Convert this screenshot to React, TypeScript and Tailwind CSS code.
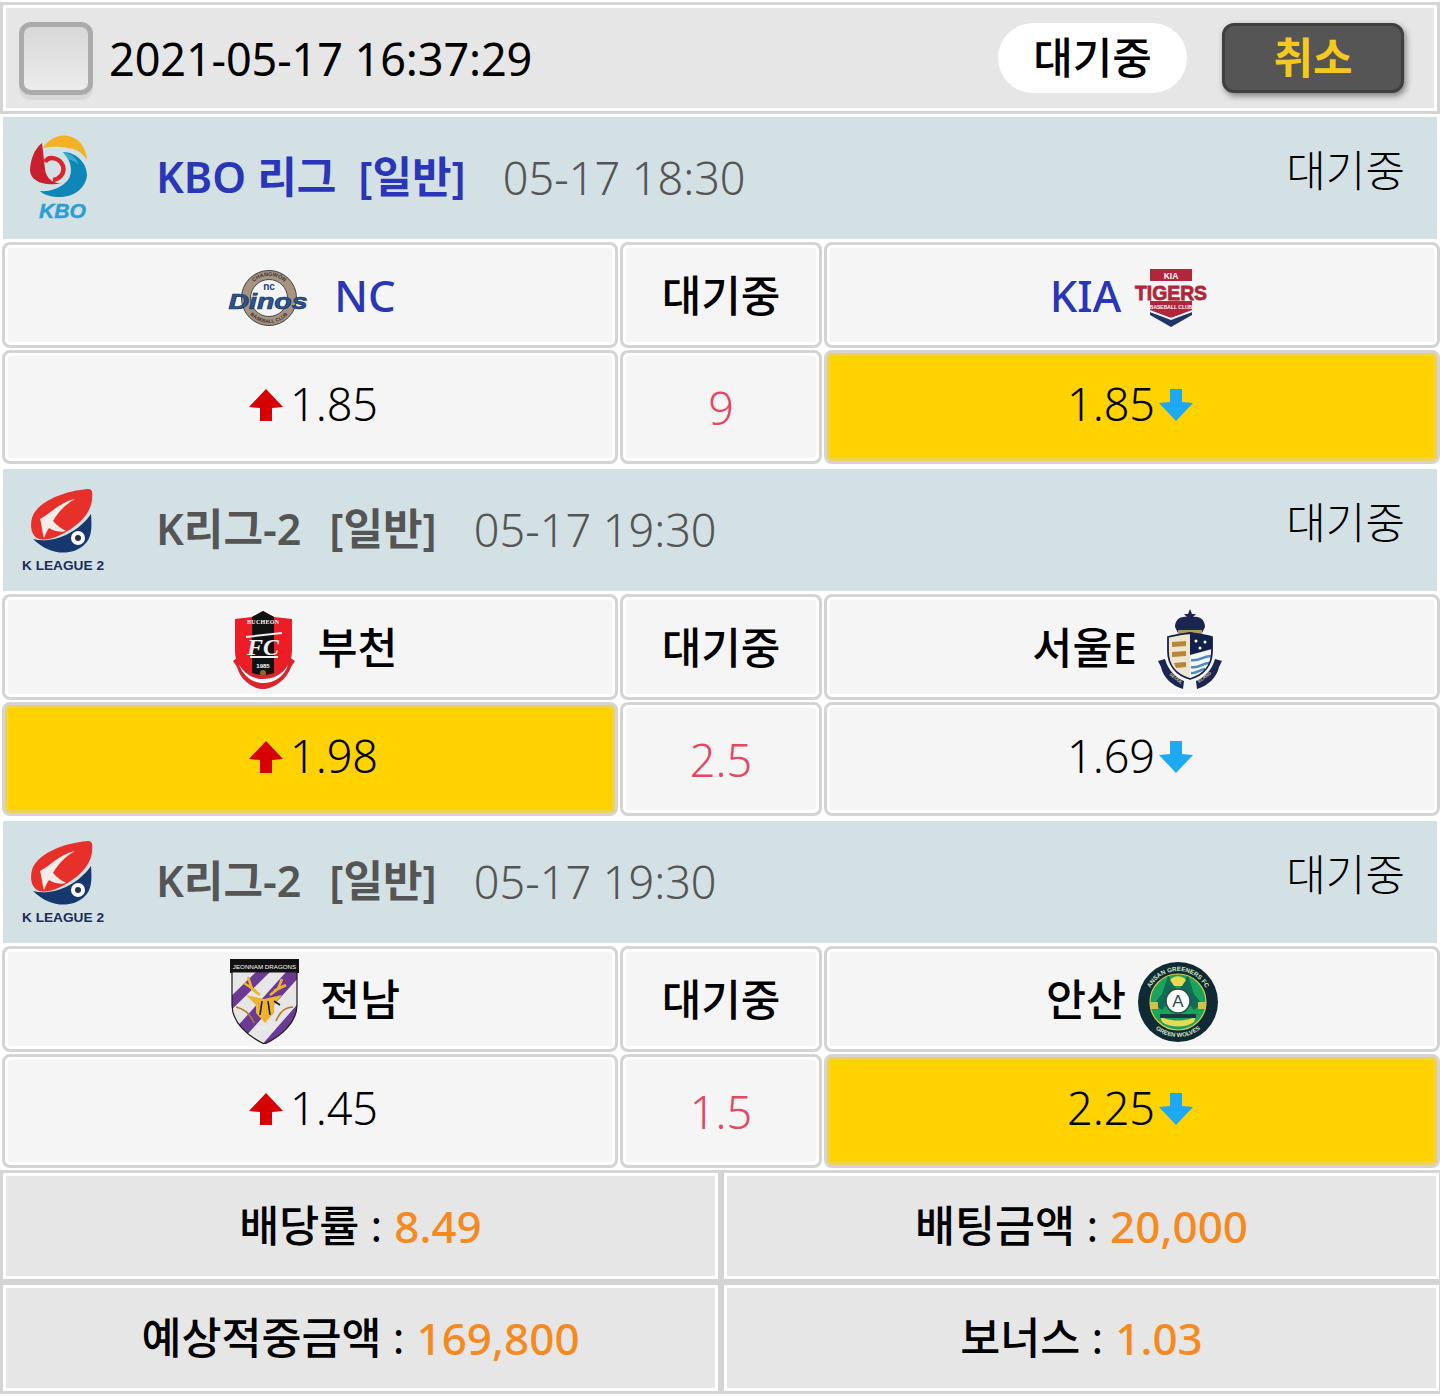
import React from 'react';

const cellClasses = "h-full rounded-lg border-[3px] border-[#d4d4d4] flex items-center justify-center";
const plainCell = "bg-[#f5f5f5] shadow-[inset_0_0_0_3px_#ffffff]";
const pickedCell = "bg-[#ffd200] shadow-[inset_0_0_0_3px_#eed251]";

const UpArrow = () => (
  <svg width="34" height="32" viewBox="0 0 34 32" className="shrink-0 mb-[4px]">
    <path d="M17 0 L34 18 L23 19 L23 32 L11 32 L11 19 L0 18 Z" fill="#d60000" />
  </svg>
);

const DownArrow = () => (
  <svg width="34" height="32" viewBox="0 0 34 32" className="shrink-0 mb-[4px]">
    <path d="M17 32 L34 14 L23 13 L23 0 L11 0 L11 13 L0 14 Z" fill="#1ea9f4" />
  </svg>
);

const KboLogo = () => (
  <svg width="57" height="87" viewBox="0 0 57 87" className="shrink-0">
    <path d="M13 13 C18 4 30 -1 38 1 C49 3 56 12 57 25 C52 17 45 13 37 13 C30 11 20 12 13 13 Z" fill="#f4b223" />
    <path d="M33 17 C46 17 57 28 57 40 C56 53 44 62 30 62 C22 62 14 60 10 56 C22 57 32 52 38 45 C43 38 42 26 33 17 Z" fill="#0f86b8" />
    <path d="M33 17 C40 18 47 23 49 30 C45 26 41 25 38 24 Z" fill="#39a9cf" />
    <path d="M12 8 C4 14 0 26 0 36 C1 46 14 52 32 48 C24 49 16 44 15 34 C14 26 13 16 12 8 Z" fill="#c8202f" />
    <path d="M15 27 C19 20 30 23 33 31 C35 38 30 44 23 45" fill="none" stroke="#d8262f" strokeWidth="4.5" />
    <text x="32.5" y="83" textAnchor="middle" fontFamily="'Liberation Sans', sans-serif" fontSize="20" fontWeight="700" fontStyle="italic" fill="#2b9fd5" stroke="#2b9fd5" strokeWidth="0.4" textLength="47" lengthAdjust="spacingAndGlyphs">KBO</text>
  </svg>
);

const KLeagueLogo = () => (
  <svg width="84" height="85" viewBox="0 0 84 85" className="shrink-0">
    <path d="M69 26 C70 40 70 50 62 57 C50 68 28 68 11 51 C30 56 55 46 69 26 Z" fill="#17386f" />
    <path d="M10 30 C14 15 40 3 66 1 C70 1 71 4 70 10 C70 24 58 36 44 44 C34 50 22 54 15 50 C9 46 8 38 10 30 Z" fill="#e8302a" />
    <path d="M18 31 C28 26 38 14 53 11 C42 17 35 26 31 33 C35 38 42 42 44 43 C37 45 30 42 27 40 C24 44 23 48 22 50 C20 44 20 38 18 31 Z" fill="#f7ece8" />
    <circle cx="56" cy="50" r="7" fill="#ffffff" />
    <circle cx="56" cy="50" r="3" fill="#27324f" />
    <text x="0" y="82" fontFamily="'Liberation Sans', sans-serif" fontSize="13.2" fontWeight="700" fill="#1b2c55" textLength="82" lengthAdjust="spacingAndGlyphs">K LEAGUE 2</text>
  </svg>
);

const DinosLogo = () => (
  <svg width="82" height="56" viewBox="0 0 82 56" className="shrink-0 mt-[5px]">
    <circle cx="42" cy="28" r="27.5" fill="#a8937e" stroke="#3e3f46" strokeWidth="1" />
    <circle cx="42" cy="28" r="18.5" fill="#f4f4f6" stroke="#4a4a50" strokeWidth="1" />
    <path id="dinosTop" d="M20 28 A22 22 0 0 1 64 28" fill="none" />
    <path id="dinosBottom" d="M17 28 A25 25 0 0 0 67 28" fill="none" />
    <text fontFamily="'Liberation Sans', sans-serif" fontSize="5.5" fontWeight="700" fill="#33343a">
      <textPath href="#dinosTop" startOffset="50%" textAnchor="middle">CHANGWON</textPath>
    </text>
    <text fontFamily="'Liberation Sans', sans-serif" fontSize="5" fontWeight="700" fill="#33343a">
      <textPath href="#dinosBottom" startOffset="50%" textAnchor="middle">BASEBALL CLUB</textPath>
    </text>
    <text x="42" y="20" textAnchor="middle" fontFamily="'Liberation Sans', sans-serif" fontSize="10" fontWeight="700" fill="#1d3f7c">nc</text>
    <text x="41" y="39" textAnchor="middle" fontFamily="'Liberation Sans', sans-serif" fontSize="22" fontWeight="700" fontStyle="italic" fill="#2a5693" stroke="#163363" strokeWidth="0.7" textLength="79" lengthAdjust="spacingAndGlyphs">Dinos</text>
  </svg>
);

const TigersLogo = () => (
  <svg width="76" height="60" viewBox="0 0 76 60" className="shrink-0 mt-[5px]">
    <path d="M17 1 L59 1 L59 43 L38 50 L17 43 Z" fill="#b2263c" />
    <path d="M17 44 L38 51 L59 44 L59 47 L38 59 L17 47 Z" fill="#1e3768" />
    <path d="M17 42 L38 50 L59 42 L59 44 L38 52 L17 44 Z" fill="#f5f5f5" />
    <rect x="0" y="13" width="76" height="20" fill="#f5f5f5" />
    <text x="38" y="10.5" textAnchor="middle" fontFamily="'Liberation Sans', sans-serif" fontSize="8.5" fontWeight="700" fill="#ffffff">KIA</text>
    <text x="38" y="32" textAnchor="middle" fontFamily="'Liberation Sans', sans-serif" fontSize="20" fontWeight="700" fill="#b2263c" stroke="#b2263c" strokeWidth="0.8" textLength="72" lengthAdjust="spacingAndGlyphs">TIGERS</text>
    <text x="38" y="41" textAnchor="middle" fontFamily="'Liberation Sans', sans-serif" fontSize="5" fontWeight="700" fill="#ffffff">BASEBALL CLUB</text>
  </svg>
);

const BucheonLogo = () => (
  <svg width="64" height="78" viewBox="0 0 64 78" className="shrink-0 mt-[5px]">
    <path d="M3 8 L20 6 L31 0 L42 6 L60 8 L60 40 C60 54 50 64 31 73 C12 64 3 54 3 40 Z" fill="#ee1c25" />
    <path d="M20 6 L31 0 L42 6 L42 66 L31 72 L20 66 Z" fill="#111111" />
    <text x="31" y="13" textAnchor="middle" fontFamily="'Liberation Serif', serif" fontSize="6" fontWeight="700" fill="#ffffff" textLength="32">BUCHEON</text>
    <text x="31" y="44" textAnchor="middle" fontFamily="'Liberation Serif', serif" fontSize="24" fontWeight="700" fontStyle="italic" fill="#f2f2f2">FC</text>
    <path d="M14 26 L50 22 M18 46 L46 46" stroke="#f2f2f2" strokeWidth="2" />
    <text x="31" y="57" textAnchor="middle" fontFamily="'Liberation Sans', sans-serif" fontSize="6" fontWeight="700" fill="#ffffff">1985</text>
    <circle cx="31" cy="62" r="3" fill="#8c6a2c" />
    <path d="M1 50 L6 46 C10 58 20 64 31 64 C42 64 53 58 57 46 L63 50 L59 56 C55 68 42 78 31 78 C20 78 8 68 5 56 Z" fill="#d9252c" />
    <path d="M7 54 C14 64 22 68 31 68 C41 68 50 64 56 54 C52 66 42 72 31 72 C21 72 12 66 7 54 Z" fill="#ffffff" />
  </svg>
);

const SeoulLogo = () => (
  <svg width="64" height="80" viewBox="0 0 64 80" className="shrink-0 mt-[3px] -ml-[2px]">
    <path d="M32 0 L34 5 L38 5 L35 8 C42 7 47 11 47 18 L44 24 L20 24 L17 18 C17 11 22 7 29 8 L26 5 L30 5 Z" fill="#1a2552" />
    <rect x="20" y="21" width="24" height="4" fill="#b89a5c" />
    <path d="M10 28 C18 26 26 25 32 24 L32 70 C18 66 10 56 10 42 Z" fill="#efe6cf" />
    <path d="M32 24 C38 25 46 26 54 28 L54 42 C54 56 46 66 32 70 Z" fill="#14204c" />
    <path d="M32 46 L54 40 C54 56 46 66 32 70 Z" fill="#f5f6f7" />
    <path d="M33 51 C40 53 46 47 53 47 M33 58 C40 60 45 54 51 54 M33 64 C38 65 43 60 47 60" stroke="#4b8bbd" strokeWidth="2.4" fill="none" />
    <path d="M14 33 L28 32 L28 37 L14 38 Z M14 43 L28 42 L28 47 L14 48 Z M16 54 L28 53 L28 58 L18 59 Z" fill="#b5873a" />
    <circle cx="38" cy="32" r="1.5" fill="#ffffff" />
    <circle cx="47" cy="33" r="1.5" fill="#ffffff" />
    <circle cx="42" cy="39" r="1.5" fill="#ffffff" />
    <path d="M10 28 C18 26 26 25 32 24 C38 25 46 26 54 28 L54 42 C54 56 46 66 32 70 C18 66 10 56 10 42 Z" fill="none" stroke="#14204c" strokeWidth="1.8" />
    <path d="M0 52 L7 50 C10 62 20 70 26 72 L25 80 C14 77 5 68 3 58 Z M64 52 L57 50 C54 62 44 70 38 72 L39 80 C50 77 59 68 61 58 Z" fill="#1a2552" />
    <text x="11" y="66" fontFamily="'Liberation Sans', sans-serif" fontSize="4.5" fontWeight="700" fill="#d7c99a" transform="rotate(38 11 66)">SEOUL</text>
    <text x="41" y="74" fontFamily="'Liberation Sans', sans-serif" fontSize="4.5" fontWeight="700" fill="#d7c99a" transform="rotate(-36 41 74)">ELAND</text>
  </svg>
);

const JeonnamLogo = () => (
  <svg width="69" height="85" viewBox="0 0 69 85" className="shrink-0 mt-[5px]">
    <defs>
      <clipPath id="jeonnamShield">
        <path d="M2 13 L67 13 L67 46 C67 64 50 78 34.5 85 C19 78 2 64 2 46 Z" />
      </clipPath>
    </defs>
    <rect x="0" y="0" width="69" height="14" fill="#111111" />
    <text x="34.5" y="10" textAnchor="middle" fontFamily="'Liberation Sans', sans-serif" fontSize="6.2" fill="#ffffff">JEONNAM DRAGONS</text>
    <g clipPath="url(#jeonnamShield)">
      <rect x="0" y="13" width="69" height="72" fill="#e6e6e6" />
      <path d="M-10 48 L26 13 L40 13 L-10 62 Z M-4 80 L56 13 L69 13 L69 18 L6 88 Z M30 88 L72 40 L72 58 L46 88 Z" fill="#6b3a94" />
      <path d="M6 48 C14 50 20 54 24 64 M63 48 C56 48 50 52 46 62" stroke="#b7762b" strokeWidth="1.6" fill="none" />
      <path d="M18 18 L22 30 L30 36 M52 20 L48 30 L40 36 M14 24 L26 32 M56 26 L44 32" stroke="#f0b32e" strokeWidth="2.6" fill="none" />
      <path d="M16 36 L34 40 L52 36 L44 46 L44 54 L35 64 L26 54 L26 46 Z" fill="#f0b32e" />
      <path d="M32 42 L30 56 M38 42 L40 56 M44 42 L50 46" stroke="#1b1b1b" strokeWidth="1.6" />
      <text x="34" y="72" textAnchor="middle" fontFamily="'Liberation Sans', sans-serif" fontSize="8" fontWeight="700" fill="#eeeeee">JDFC</text>
    </g>
    <path d="M2 13 L67 13 L67 46 C67 64 50 78 34.5 85 C19 78 2 64 2 46 Z" fill="none" stroke="#1a1a1a" strokeWidth="1.2" />
  </svg>
);

const AnsanLogo = () => (
  <svg width="80" height="80" viewBox="0 0 80 80" className="shrink-0 mt-[5px]">
    <circle cx="40" cy="40" r="40" fill="#0f2a35" />
    <circle cx="40" cy="40" r="28" fill="#1ba25c" stroke="#d9c94a" strokeWidth="1.2" />
    <path id="ansanTop" d="M9 40 A31 31 0 0 1 71 40" fill="none" />
    <path id="ansanBottom" d="M5 40 A35 35 0 0 0 75 40" fill="none" />
    <text fontFamily="'Liberation Sans', sans-serif" fontSize="6.2" fontWeight="700" fill="#d5e6c0">
      <textPath href="#ansanTop" startOffset="50%" textAnchor="middle">ANSAN GREENERS FC</textPath>
    </text>
    <text fontFamily="'Liberation Sans', sans-serif" fontSize="6" fontWeight="700" fill="#d5e6c0">
      <textPath href="#ansanBottom" startOffset="50%" textAnchor="middle">GREEN WOLVES</textPath>
    </text>
    <path d="M30 14 L38 22 L36 34 L24 48 L16 42 L24 32 Z M50 14 L42 22 L44 34 L56 48 L64 42 L56 32 Z" fill="#0f6d55" />
    <path d="M32 18 C36 13 44 13 48 18 L44 24 L36 24 Z" fill="#e8d94e" />
    <rect x="12" y="40" width="8" height="7" fill="#cfc444" />
    <rect x="60" y="40" width="8" height="7" fill="#cfc444" />
    <path d="M22 54 C30 60 50 60 58 54 L56 60 C48 66 32 66 24 60 Z" fill="#e8d94e" />
    <circle cx="40" cy="39" r="12" fill="#ffffff" stroke="#2b4b4f" strokeWidth="1.6" />
    <text x="40" y="45" textAnchor="middle" fontFamily="'Liberation Sans', sans-serif" fontSize="17" fill="#2b4b4f">A</text>
    <rect x="22" y="52" width="36" height="4" fill="#133c3d" />
  </svg>
);

type Game = {
  league: string;
  time: string;
  titleColor: string;
  tagGap: string;
  logo: React.ReactNode;
  home: string;
  homeLogo: React.ReactNode;
  homeLayout: string;
  homeColor: string;
  away: string;
  awayLogo: React.ReactNode;
  awayLayout: string;
  awayColor: string;
  homeOdds: string;
  line: string;
  awayOdds: string;
  picked: 'home' | 'away';
};

const games: Game[] = [
  {
    league: 'KBO 리그',
    time: '05-17 18:30',
    titleColor: 'text-[#2a36b8]',
    tagGap: 'ml-[22px]',
    logo: <div className="ml-[27px] mr-[69px] w-[57px]"><KboLogo /></div>,
    home: 'NC',
    homeLogo: <DinosLogo />,
    homeLayout: 'gap-[25px] pl-[3px]',
    homeColor: 'text-[#2a36b8]',
    away: 'KIA',
    awayLogo: <TigersLogo />,
    awayLayout: 'gap-[12px] pr-[5px]',
    awayColor: 'text-[#2a36b8]',
    homeOdds: '1.85',
    line: '9',
    awayOdds: '1.85',
    picked: 'away',
  },
  {
    league: 'K리그-2',
    time: '05-17 19:30',
    titleColor: 'text-[#555555]',
    tagGap: 'ml-[28px]',
    logo: <div className="ml-[19px] mr-[50px] w-[84px]"><KLeagueLogo /></div>,
    home: '부천',
    homeLogo: <BucheonLogo />,
    homeLayout: 'gap-[21px] pl-[10px]',
    homeColor: 'text-black',
    away: '서울E',
    awayLogo: <SeoulLogo />,
    awayLayout: 'gap-[23px] pr-[10px]',
    awayColor: 'text-black',
    homeOdds: '1.98',
    line: '2.5',
    awayOdds: '1.69',
    picked: 'home',
  },
  {
    league: 'K리그-2',
    time: '05-17 19:30',
    titleColor: 'text-[#555555]',
    tagGap: 'ml-[28px]',
    logo: <div className="ml-[19px] mr-[50px] w-[84px]"><KLeagueLogo /></div>,
    home: '전남',
    homeLogo: <JeonnamLogo />,
    homeLayout: 'gap-[21px] pl-[10px]',
    homeColor: 'text-black',
    away: '안산',
    awayLogo: <AnsanLogo />,
    awayLayout: 'gap-[12px]',
    awayColor: 'text-black',
    homeOdds: '1.45',
    line: '1.5',
    awayOdds: '2.25',
    picked: 'away',
  },
];

const GameBlock: React.FC<{ game: Game }> = ({ game }) => (
  <div className="flex flex-col gap-[4px] mb-[6px]">
    <div className="h-[122px] ml-[3px] mr-[3px] bg-[#d3e0e4] flex items-center relative">
      {game.logo}
      <div className={`mb-[1px] text-[43px] font-semibold ${game.titleColor}`}>
        <span>{game.league}</span>
        <span className={game.tagGap}>[일반]</span>
      </div>
      <div className="ml-[37px] mb-[1px] text-[45px] font-light text-[#555555]">{game.time}</div>
      <div className="ml-auto mr-[32px] mb-[14px] text-[43px] font-light text-black">대기중</div>
    </div>

    <div className="grid grid-cols-[616px_202px_616px] gap-[2px] ml-[2px] h-[106px] -my-[1px]">
      <div className={`${cellClasses} ${plainCell} ${game.homeLayout}`}>
        {game.homeLogo}
        <span className={`mt-[2px] text-[43.5px] font-medium ${game.homeColor}`}>{game.home}</span>
      </div>
      <div className={`${cellClasses} ${plainCell}`}>
        <span className="mt-[2px] text-[43px] font-medium text-black">대기중</span>
      </div>
      <div className={`${cellClasses} ${plainCell} ${game.awayLayout}`}>
        <span className={`mt-[2px] text-[43.5px] font-medium ${game.awayColor}`}>{game.away}</span>
        {game.awayLogo}
      </div>
    </div>

    <div className="grid grid-cols-[616px_202px_616px] gap-[2px] ml-[2px] h-[114px] -my-[1px]">
      <div className={`${cellClasses} gap-[7px] pl-[7px] ${game.picked === 'home' ? pickedCell : plainCell}`}>
        <UpArrow />
        <span className="mb-[6px] text-[45px] font-light text-black">{game.homeOdds}</span>
      </div>
      <div className={`${cellClasses} ${plainCell}`}>
        <span className="mt-[2px] text-[45px] font-light text-[#e8455f]">{game.line}</span>
      </div>
      <div className={`${cellClasses} gap-[4px] pr-[4px] ${game.picked === 'away' ? pickedCell : plainCell}`}>
        <span className="mb-[6px] text-[45px] font-light text-black">{game.awayOdds}</span>
        <DownArrow />
      </div>
    </div>
  </div>
);

const SummaryCell: React.FC<{ label: string; value: string }> = ({ label, value }) => (
  <div className="h-[106px] border-[3px] border-white bg-[#e6e6e6] flex items-center justify-center text-[43.5px] font-medium text-black">
    <span>{label} <span className="font-normal">:</span></span>
    <span className="ml-[12px] text-[44px] text-[#f58a1f]">{value}</span>
  </div>
);

const App: React.FC = () => {
  return (
    <div className="w-[1440px] h-[1396px] bg-white pt-[2px] overflow-hidden font-['Noto_Sans','Noto_Sans_CJK_KR',sans-serif]">
      <div className="bg-[#d4d4d4] p-[3px] h-[112px]">
        <div className="h-full border-[3px] border-white bg-[#e6e6e6] flex items-center pl-[13px] pr-[30px]">
          <div className="w-[74px] h-[78px] mt-[6px] rounded-xl bg-[#d8d8d8] shrink-0">
            <div className="w-[74px] h-[73px] rounded-xl border-[5px] border-[#ababab] bg-gradient-to-b from-[#d8d8d8] to-[#ececec]" />
          </div>
          <div className="ml-[16px] mt-[2px] text-[45px] tracking-[-0.1px] text-black">2021-05-17 16:37:29</div>
          <div className="ml-auto w-[189px] h-[70px] rounded-full bg-white flex items-center justify-center text-[43px] font-medium text-black">
            대기중
          </div>
          <div className="ml-[35px] w-[182px] h-[70px] rounded-xl border-[3px] border-[#3f3f3f] bg-[#555555] shadow-[2px_3px_6px_rgba(0,0,0,0.45)] flex items-center justify-center text-[43px] font-semibold text-[#f4c81e]">
            취소
          </div>
        </div>
      </div>

      <div className="mt-[3px]">
        {games.map((game, i) => (
          <GameBlock key={i} game={game} />
        ))}
      </div>

      <div className="bg-[#d4d4d4] p-[3px] pr-0 grid grid-cols-[715px_715px] gap-[6px] -mt-[3px]">
        <SummaryCell label="배당률" value="8.49" />
        <SummaryCell label="배팅금액" value="20,000" />
        <SummaryCell label="예상적중금액" value="169,800" />
        <SummaryCell label="보너스" value="1.03" />
      </div>
    </div>
  );
};

export default App;
